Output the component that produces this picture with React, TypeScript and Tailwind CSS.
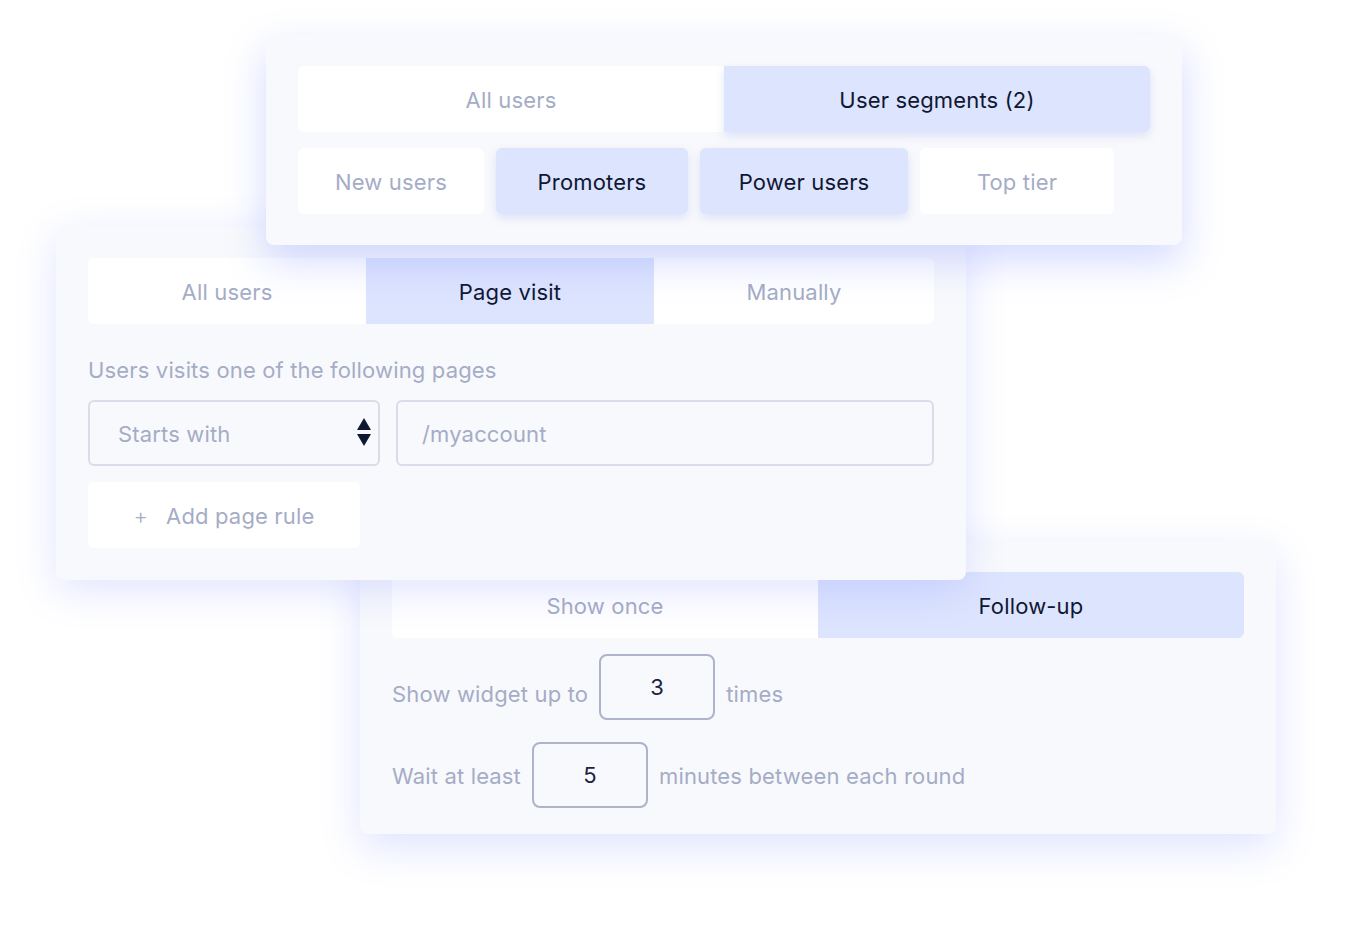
import { ReactNode } from 'react';

const font = { fontFamily: 'Inter, "Noto Sans", sans-serif', letterSpacing: '0.01em' };

function Segment({ active, children, className = '' }: { active?: boolean; children: ReactNode; className?: string }) {
    return (
        <div
            className={`flex items-center justify-center h-[66px] pt-[2px] text-[22px] ${
                active ? 'bg-[#dde4fe] text-[#0f1733]' : 'bg-white text-[#a5acc6]'
            } ${className}`}
        >
            {children}
        </div>
    );
}

function NumberBox({ value }: { value: string }) {
    return (
        <div className="flex items-center justify-center w-[116px] h-[66px] border-2 border-[#acb3ca] rounded-lg text-[22px] text-[#1c2340]">
            {value}
        </div>
    );
}

function SortArrows() {
    return (
        <svg width="14" height="30" viewBox="0 0 14 30" className="shrink-0">
            <path d="M7 0 L14 12 L0 12 Z" fill="#0f1733" />
            <path d="M0 16 L14 16 L7 28 Z" fill="#0f1733" />
        </svg>
    );
}

export default function App() {
    return (
        <div className="relative w-[1368px] h-[938px] bg-white overflow-hidden" style={font}>
            {/* Frequency card (bottom layer) */}
            <div className="absolute left-[360px] top-[540px] w-[916px] h-[294px] bg-[#f8f9fc] rounded-lg px-8 pt-8 shadow-[0_14px_40px_rgba(100,122,255,0.2)]">
                <div className="flex">
                    <Segment className="flex-1 rounded-l-md">Show once</Segment>
                    <Segment active className="flex-1 rounded-r-md">Follow-up</Segment>
                </div>
                <div className="flex items-center gap-[11px] mt-4 text-[22px] text-[#a5acc6]">
                    <span className="pt-[14px]">Show widget up to</span>
                    <NumberBox value="3" />
                    <span className="pt-[14px]">times</span>
                </div>
                <div className="flex items-center gap-[11px] mt-[22px] text-[22px] text-[#a5acc6]">
                    <span className="pt-[2px]">Wait at least</span>
                    <NumberBox value="5" />
                    <span className="pt-[2px]">minutes between each round</span>
                </div>
            </div>

            {/* Page visit card (middle layer) */}
            <div className="absolute left-[56px] top-[226px] w-[910px] h-[354px] bg-[#f8f9fc] rounded-lg px-8 pt-8 shadow-[0_10px_40px_rgba(100,122,255,0.2)]">
                <div className="flex">
                    <Segment className="w-[278px] rounded-l-md">All users</Segment>
                    <Segment active className="w-[288px]">Page visit</Segment>
                    <Segment className="flex-1 rounded-r-md">Manually</Segment>
                </div>
                <p className="mt-8 text-[22px] leading-7 text-[#a5acc6]">Users visits one of the following pages</p>
                <div className="flex gap-4 mt-4">
                    <div className="flex items-center justify-between w-[292px] h-[66px] border-2 border-[#dadcea] rounded-md pl-7 pr-[7px] text-[22px] text-[#a5acc6]">
                        <span className="pt-[2px]">Starts with</span>
                        <SortArrows />
                    </div>
                    <div className="flex items-center flex-1 h-[66px] border-2 border-[#dadcea] rounded-md pl-6 pt-[2px] text-[22px] text-[#a5acc6]">
                        /myaccount
                    </div>
                </div>
                <div className="flex items-center justify-center gap-[18px] w-[272px] h-[66px] mt-4 pt-[2px] bg-white rounded-md text-[22px] text-[#a5acc6]">
                    <span className="text-[22px] font-light">+</span>
                    <span>Add page rule</span>
                </div>
            </div>

            {/* Audience card (top layer) */}
            <div className="absolute left-[266px] top-[35px] w-[916px] h-[210px] bg-[#f8f9fc] rounded-lg px-8 pt-[31px] shadow-[0_16px_40px_rgba(100,122,255,0.28)]">
                <div className="flex">
                    <Segment className="flex-1 rounded-l-md">All users</Segment>
                    <Segment active className="flex-1 rounded-r-md shadow-[0_4px_10px_rgba(100,122,230,0.18)]">
                        User segments (2)
                    </Segment>
                </div>
                <div className="flex gap-3 mt-4">
                    <Segment className="w-[186px] rounded-md">New users</Segment>
                    <Segment active className="w-[192px] rounded-md shadow-[0_4px_10px_rgba(100,122,230,0.18)]">Promoters</Segment>
                    <Segment active className="w-[208px] rounded-md shadow-[0_4px_10px_rgba(100,122,230,0.18)]">Power users</Segment>
                    <Segment className="w-[194px] rounded-md">Top tier</Segment>
                </div>
            </div>
        </div>
    );
}
